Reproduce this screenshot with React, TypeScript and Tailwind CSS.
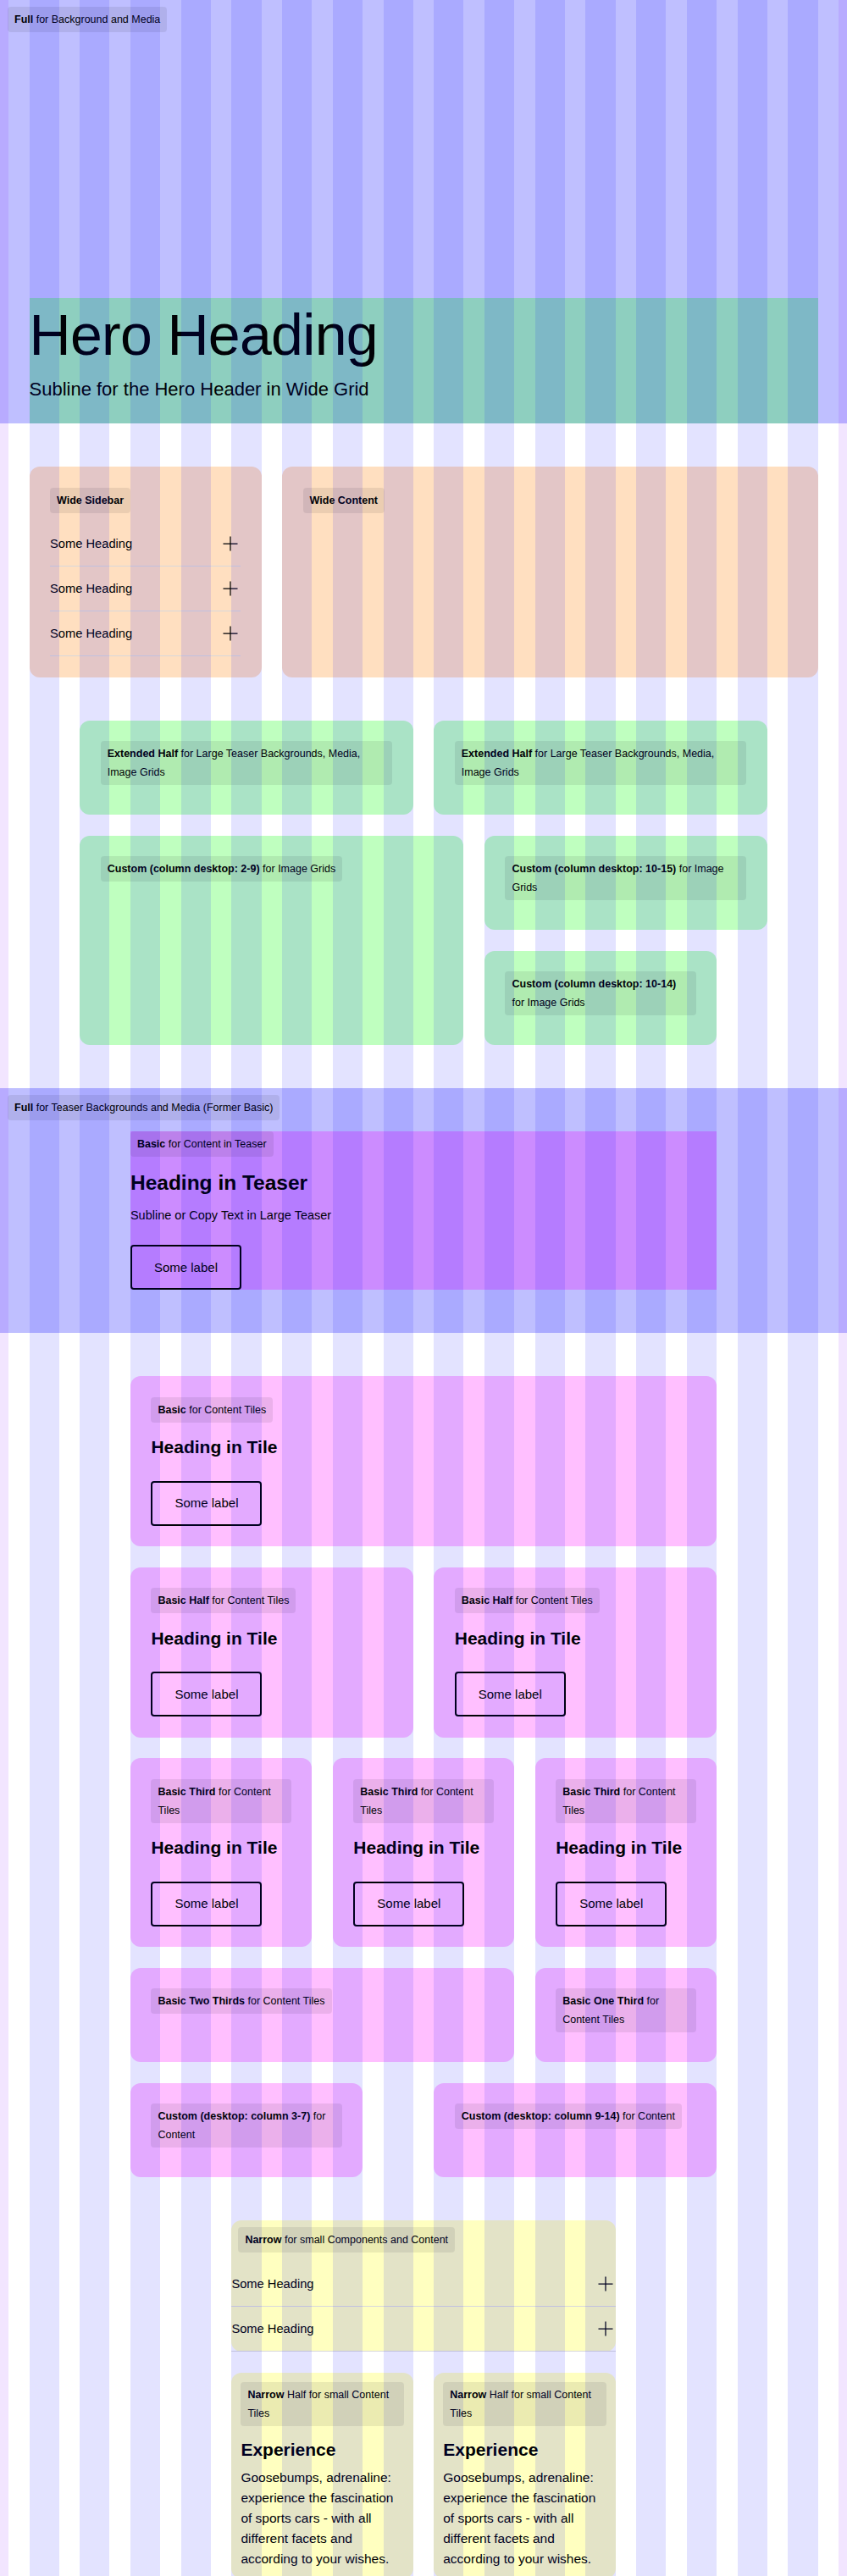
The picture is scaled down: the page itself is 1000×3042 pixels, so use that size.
import clsx from "clsx";

const GRID =
  "grid grid-cols-[10px_repeat(16,minmax(0,1fr))_10px] gap-x-[24.5px] gap-y-[24.5px]";

type LabelProps = {
  strong: string;
  rest?: string;
  className?: string;
};

function Label({ strong, rest, className }: LabelProps) {
  return (
    <div
      className={clsx(
        "w-fit rounded-[4px] bg-black/[0.08] px-[8px] py-[4px] text-[12.5px] leading-[22px]",
        className,
      )}
    >
      <span className="font-bold">{strong}</span>
      {rest ? ` ${rest}` : null}
    </div>
  );
}

function PlusIcon() {
  return (
    <svg
      viewBox="0 0 24 24"
      className="size-6 shrink-0"
      fill="none"
      stroke="#010205"
      strokeWidth={1.25}
    >
      <path d="M12 3.5v17M3.5 12h17" />
    </svg>
  );
}

function AccordionRow() {
  return (
    <div className="flex h-[53px] items-center justify-between border-b border-[#d8d8db]">
      <span className="text-[14.7px] leading-[24px]">Some Heading</span>
      <PlusIcon />
    </div>
  );
}

function OutlineButton() {
  return (
    <div className="flex h-[53px] w-fit items-center justify-center rounded-[4px] border-2 border-[#010205] px-[26px] text-[15px] leading-[24px]">
      Some label
    </div>
  );
}

type TileProps = {
  strong: string;
  rest: string;
  className: string;
  withContent?: boolean;
};

function Tile({ strong, rest, className, withContent = false }: TileProps) {
  return (
    <div
      className={clsx(
        "flex flex-col items-start rounded-[12px] bg-[#ffbfff] p-[24.5px]",
        className,
      )}
    >
      <Label strong={strong} rest={rest} className="mb-[10.5px]" />
      {withContent && (
        <>
          <h3 className="mt-[4px] text-[21px] font-bold leading-[30px]">
            Heading in Tile
          </h3>
          <div className="mt-[24.5px]">
            <OutlineButton />
          </div>
        </>
      )}
    </div>
  );
}

function GreenCard({
  strong,
  rest,
  className,
}: {
  strong: string;
  rest: string;
  className: string;
}) {
  return (
    <div
      className={clsx(
        "flex flex-col items-start rounded-[12px] bg-[#bfffbf] p-[24.5px]",
        className,
      )}
    >
      <Label strong={strong} rest={rest} className="mb-[10.5px]" />
    </div>
  );
}

function NarrowHalf({ className }: { className: string }) {
  return (
    <div
      className={clsx(
        "flex flex-col items-start rounded-[12px] bg-[#ffffc0] p-[11px]",
        className,
      )}
    >
      <Label strong="Narrow" rest="Half for small Content Tiles" className="mb-[10.5px]" />
      <h3 className="mt-[3px] text-[21px] font-bold leading-[30px]">Experience</h3>
      <p className="mt-[6px] text-[15.5px] leading-[24px]">
        Goosebumps, adrenaline: experience the fascination of sports cars - with
        all different facets and according to your wishes.
      </p>
    </div>
  );
}

export default function App() {
  return (
    <div className="relative h-[3042px] overflow-hidden bg-white font-['Liberation_Sans',Arial,sans-serif] text-[#010205]">
      {/* Full: hero */}
      <section className="flex h-[500px] flex-col bg-[#bfbfff] pt-[8px]">
        <Label strong="Full" rest="for Background and Media" className="ml-[9px]" />
        <div className={clsx(GRID, "mt-auto")}>
          <div className="col-start-2 col-end-18 bg-[#8ecfbf] pb-[24px] pt-[9.5px]">
            <h1 className="text-[68px] leading-[68px] tracking-[-0.01em]">
              Hero Heading
            </h1>
            <p className="mt-[15px] text-[22px] leading-[32px]">
              Subline for the Hero Header in Wide Grid
            </p>
          </div>
        </div>
      </section>

      {/* Wide */}
      <section className={clsx(GRID, "mt-[51px]")}>
        <div className="col-start-2 col-end-7 flex flex-col items-stretch rounded-[12px] bg-[#ffdfc0] p-[24.5px]">
          <Label strong="Wide Sidebar" className="mb-[10.5px]" />
          <AccordionRow />
          <AccordionRow />
          <AccordionRow />
        </div>
        <div className="col-start-7 col-end-18 flex flex-col items-start rounded-[12px] bg-[#ffdfc0] p-[24.5px]">
          <Label strong="Wide Content" />
        </div>
      </section>

      {/* Extended + custom */}
      <section className={clsx(GRID, "mt-[51px]")}>
        <GreenCard
          strong="Extended Half"
          rest="for Large Teaser Backgrounds, Media, Image Grids"
          className="col-start-3 col-end-10 row-start-1"
        />
        <GreenCard
          strong="Extended Half"
          rest="for Large Teaser Backgrounds, Media, Image Grids"
          className="col-start-10 col-end-17 row-start-1"
        />
        <GreenCard
          strong="Custom (column desktop: 2-9)"
          rest="for Image Grids"
          className="col-start-3 col-end-11 row-start-2 row-span-2"
        />
        <GreenCard
          strong="Custom (column desktop: 10-15)"
          rest="for Image Grids"
          className="col-start-11 col-end-17 row-start-2"
        />
        <GreenCard
          strong="Custom (column desktop: 10-14)"
          rest="for Image Grids"
          className="col-start-11 col-end-16 row-start-3"
        />
      </section>

      {/* Full: teaser */}
      <section className="mt-[51px] bg-[#bfbfff] pb-[51px] pt-[8px]">
        <Label
          strong="Full"
          rest="for Teaser Backgrounds and Media (Former Basic)"
          className="ml-[9px]"
        />
        <div className={clsx(GRID, "mt-[13px]")}>
          <div className="col-start-4 col-end-16 flex flex-col items-start bg-[#cc8cff]">
            <Label strong="Basic" rest="for Content in Teaser" className="mb-[10px]" />
            <h2 className="mt-[3.5px] text-[24.5px] font-bold leading-[34px]">
              Heading in Teaser
            </h2>
            <p className="mt-[9px] text-[14.5px] leading-[24px]">
              Subline or Copy Text in Large Teaser
            </p>
            <div className="mt-[23.5px]">
              <OutlineButton />
            </div>
          </div>
        </div>
      </section>

      {/* Basic tiles */}
      <section className={clsx(GRID, "mt-[51px]")}>
        <Tile strong="Basic" rest="for Content Tiles" className="col-start-4 col-end-16" withContent />
        <Tile strong="Basic Half" rest="for Content Tiles" className="col-start-4 col-end-10" withContent />
        <Tile strong="Basic Half" rest="for Content Tiles" className="col-start-10 col-end-16" withContent />
        <Tile strong="Basic Third" rest="for Content Tiles" className="col-start-4 col-end-8" withContent />
        <Tile strong="Basic Third" rest="for Content Tiles" className="col-start-8 col-end-12" withContent />
        <Tile strong="Basic Third" rest="for Content Tiles" className="col-start-12 col-end-16" withContent />
        <Tile strong="Basic Two Thirds" rest="for Content Tiles" className="col-start-4 col-end-12" />
        <Tile strong="Basic One Third" rest="for Content Tiles" className="col-start-12 col-end-16" />
        <Tile
          strong="Custom (desktop: column 3-7)"
          rest="for Content"
          className="col-start-4 col-end-9"
        />
        <Tile
          strong="Custom (desktop: column 9-14)"
          rest="for Content"
          className="col-start-10 col-end-16"
        />
      </section>

      {/* Narrow */}
      <section className={clsx(GRID, "mt-[51px]")}>
        <div className="col-start-6 col-end-14 flex flex-col rounded-[12px] bg-[#ffffc0] pt-[8px]">
          <Label
            strong="Narrow"
            rest="for small Components and Content"
            className="mb-[11px] ml-[8px]"
          />
          <AccordionRow />
          <AccordionRow />
        </div>
        <NarrowHalf className="col-start-6 col-end-10" />
        <NarrowHalf className="col-start-10 col-end-14" />
      </section>

      {/* column overlay */}
      <div className="pointer-events-none absolute inset-0 z-10 grid grid-cols-[10px_repeat(16,minmax(0,1fr))_10px] gap-x-[24.5px]">
        <div className="bg-[rgba(128,0,255,0.1)]" />
        {Array.from({ length: 16 }).map((_, i) => (
          <div key={i} className="bg-[rgba(0,0,255,0.11)]" />
        ))}
        <div className="bg-[rgba(128,0,255,0.1)]" />
      </div>
    </div>
  );
}
